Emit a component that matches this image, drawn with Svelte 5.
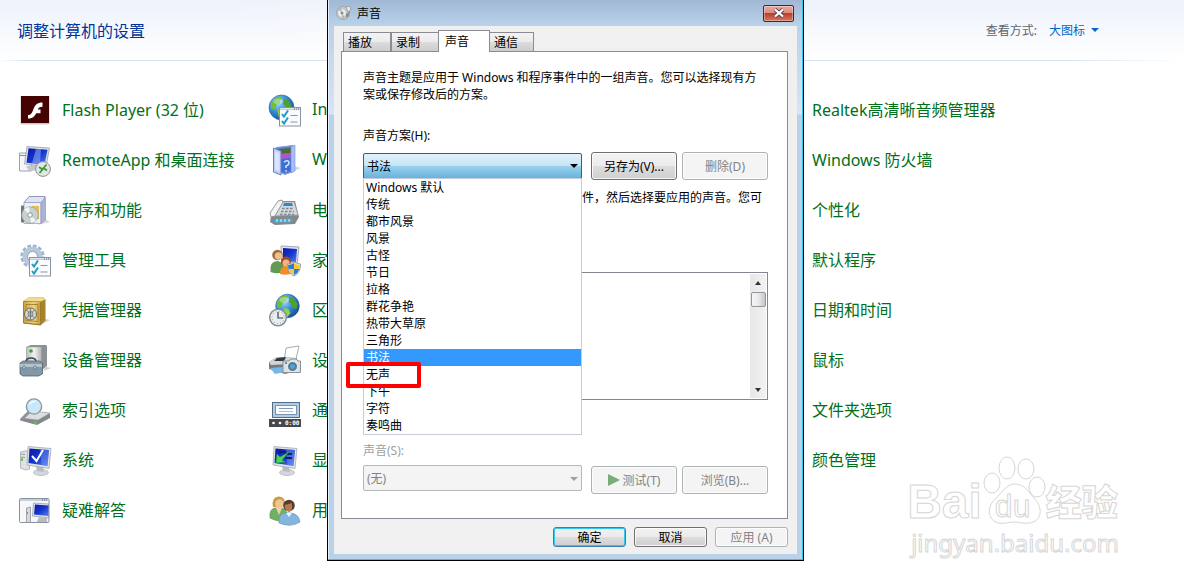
<script>
    const columns = [
        {
            place: "first",
            items: [
                { icon: "flash", label: "Flash Player (32 位)" },
                { icon: "remote", label: "RemoteApp 和桌面连接" },
                { icon: "programs", label: "程序和功能" },
                { icon: "tools", label: "管理工具" },
                { icon: "safe", label: "凭据管理器" },
                { icon: "device", label: "设备管理器" },
                { icon: "index", label: "索引选项" },
                { icon: "system", label: "系统" },
                { icon: "trouble", label: "疑难解答" },
            ],
        },
        {
            place: "second",
            items: [
                { icon: "internet", label: "In" },
                { icon: "cards", label: "W" },
                { icon: "phone", label: "电" },
                { icon: "family", label: "家" },
                { icon: "region", label: "区" },
                { icon: "printer", label: "设" },
                { icon: "taskbar", label: "通" },
                { icon: "display", label: "显" },
                { icon: "users", label: "用" },
            ],
        },
        {
            place: "fourth",
            items: [
                { label: "Realtek高清晰音频管理器" },
                { label: "Windows 防火墙" },
                { label: "个性化" },
                { label: "默认程序" },
                { label: "日期和时间" },
                { label: "鼠标" },
                { label: "文件夹选项" },
                { label: "颜色管理" },
            ],
        },
    ];

    const tabs = ["播放", "录制", "声音", "通信"];
    let activeTab = $state("声音");

    const schemes = [
        "Windows 默认",
        "传统",
        "都市风景",
        "风景",
        "古怪",
        "节日",
        "拉格",
        "群花争艳",
        "热带大草原",
        "三角形",
        "书法",
        "无声",
        "下午",
        "字符",
        "奏鸣曲",
    ];
    let scheme = $state("书法");
</script>

{#snippet checklist()}
    <rect x="10.5" y="13.5" width="21" height="18.5" fill="#fafbfd" stroke="#8a93a3" />
    <path d="M11 14.5h20v1.5H11z" fill="#c5ccd8" />
    <path d="M25 15h1m1 0h1m1 0h1" stroke="#55607a" />
    <path d="M13 20l2 2.5 4-6M13 27l2 2.5 4-6" fill="none" stroke="#1f9bc4" stroke-width="2" />
    <path d="M21.5 21.5h7M21.5 28h7" stroke="#8d93a8" stroke-width="1.2" />
{/snippet}

{#snippet globe(cx, cy, r)}
    <circle {cx} {cy} {r} fill="url(#sea)" stroke="#2a5d9e" stroke-width=".6" />
    <g transform="translate({cx} {cy})">
        <path d="M-9-6q3-5 8-5l2 2-3 2 1 3-4 1-1 4-4 1-1-3z" fill="#6cbf3c" />
        <path d="M2-9l5 2 3 5-1 5-4-1-1-4-3-2z" fill="#4f9f2e" />
        <path d="M-4 2l5 1 2 4-3 4-3-2z" fill="#8fd04d" />
        <ellipse cx="-3" cy="-6" rx="5" ry="3" fill="#fff" opacity=".35" />
    </g>
{/snippet}

{#snippet screen()}
    <ellipse cx="22" cy="28.5" rx="7.5" ry="3" fill="#d3d6da" stroke="#a4a8ad" stroke-width=".6" />
    <path d="M17 22l7 1 1 5-7-1z" fill="#b9bdc3" />
    <path d="M9 2.5l23 2-2 20-22-3.500z" fill="#dfe3e6" stroke="#9ba0a6" stroke-width=".7" />
    <path d="M10.5 4.500l19.500 1.600-1.500 16-19-3z" fill="url(#blue)" />
    <path d="M21 5.300l9 .8-1.500 16-6-1z" fill="#7fa4f5" opacity=".4" />
{/snippet}

{#snippet icon(name)}
    <svg class="icon" viewBox="0 0 32 32" aria-hidden="true">
        {#if name === "flash"}
            <rect x="1.5" y="2" width="29" height="28.5" rx="1" fill="#c9c9c9" />
            <rect x="2" y="2" width="28" height="27" fill="#440203" />
            <path d="M23.5 8.500v4.300c-3 0-4 .8-4.700 2.700H21.500v3.700h-4.300c-1.800 3.500-3.800 5.300-8.200 5.300v-3.500c3 0 4-2 5.300-5.500 1.600-4.500 4-7 9.200-7z" fill="#fff" />
        {:else if name === "remote"}
            <path d="M.5 9h12v18H.5z" fill="#f4f6f9" stroke="#9aa3b0" />
            <path d="M1 11.500h8" stroke="#7b8ca8" />
            <path d="M7 22l13-1 3 5-13 1z" fill="#c3c7cd" />
            <path d="M8 2.500l22.500 1.500-3.500 18.500-21.500-2.500z" fill="#dde1e5" stroke="#8e949c" stroke-width=".7" />
            <path d="M9.500 4.300l19 1.400-3 15-18-2z" fill="url(#blue)" />
            <path d="M17 5l5 .3-1 15-8-1z" fill="#8fb0fa" opacity=".55" />
            <circle cx="24" cy="25" r="7.4" fill="#e3e5e7" stroke="#8d9196" />
            <path d="M20 23l3.500 2.500-3 3.500M27.500 20.500l-3 3.500 3.500 2.500" fill="none" stroke="#3b9b32" stroke-width="1.8" />
        {:else if name === "programs"}
            <path d="M25 24l6 4-12 3z" fill="#c7c9cc" opacity=".7" />
            <path d="M10 2.500h16l-2 6H5z" fill="#dfe4f5" stroke="#7780a8" stroke-width=".8" />
            <path d="M5 8.500h17v21H5z" fill="#edf0f9" stroke="#9aa2c0" stroke-width=".8" />
            <path d="M22 8.500l4.500-5V26L22 29.500z" fill="#a9b4d8" stroke="#8890b5" stroke-width=".6" />
            <path d="M13 12h7v13h-7z" fill="#e9b85d" />
            <path d="M2 11.500h3v17H2z" fill="#727b82" />
            <circle cx="11" cy="21" r="8.3" fill="#c9d0d0" stroke="#949d9b" stroke-width=".7" />
            <path d="M11 21L5 15.500a8 8 0 0 1 5-2.500zM11 21l6 5.500a8 8 0 0 1-5 2.300z" fill="#f2f8f2" />
            <circle cx="11" cy="21" r="2.3" fill="#fff" stroke="#899" />
        {:else if name === "tools"}
            <circle cx="13.5" cy="12.5" r="10.6" fill="none" stroke="#a0b4cb" stroke-width="3" stroke-dasharray="3.7 1.85" />
            <circle cx="13.5" cy="12.5" r="7.5" fill="none" stroke="#b6c8dc" stroke-width="5" />
            <circle cx="13.5" cy="12.5" r="5" fill="#fff" stroke="#879cb5" />
            {@render checklist()}
        {:else if name === "safe"}
            <path d="M23 24l8 2-8 4z" fill="#d5d5d5" />
            <path d="M4.500 7l5-3.500h15l2 2v21l-5 5-17-2z" fill="#a9812b" />
            <path d="M4.500 7.500h17v23l-17-1.500z" fill="url(#gold)" stroke="#98762a" stroke-width=".8" />
            <path d="M4.500 7l5-3.500h15l2 2-5 2z" fill="#f0db8d" />
            <path d="M7 10.500h12v17l-12-1z" fill="none" stroke="#ad852e" />
            <circle cx="11.5" cy="20" r="6" fill="#d4d7d2" stroke="#6b6c66" />
            <circle cx="11.5" cy="20" r="2.5" fill="#f3f3f3" stroke="#777" />
            <path d="M7.500 16l8 8m0-8l-8 8M11.500 14.500v11" stroke="#777b78" />
        {:else if name === "device"}
            <path d="M27 23l5 1-8 3z" fill="#ccc" />
            <path d="M7.500 3l4-2h15.500l1 1v20l-5 4H7.500z" fill="#8e9194" />
            <path d="M7.500 3h15v23h-15z" fill="url(#metal)" stroke="#999" stroke-width=".5" />
            <circle cx="12" cy="7" r="1.8" fill="#35a532" />
            <path d="M7 18q0-4 5-4t5 4" fill="none" stroke="#3c454d" stroke-width="1.7" />
            <path d="M1 19l3-2h17l2.500 2v11l-4 2H4l-3-2z" fill="#8297a8" stroke="#526572" stroke-width=".8" />
            <path d="M1 20h22v3H1z" fill="#b4c4cf" />
            <path d="M4 22h2v3H4zM15 22h2v3h-2z" fill="#e8edf1" stroke="#536470" stroke-width=".7" />
        {:else if name === "index"}
            <path d="M3 24l11-7 17 2v5l-13 7-15-4z" fill="#85888b" />
            <path d="M3 24l11-7 17 2-12 7z" fill="#dcdee0" stroke="#a1a4a7" stroke-width=".6" />
            <path d="M15 27l2.500 .5v2.500l-2.500-.5z" fill="#4cd53f" />
            <path d="M10 18l-7.500 7.500" stroke="#8c9297" stroke-width="3" stroke-linecap="round" />
            <circle cx="15" cy="12.5" r="7.6" fill="#cbe8fa" stroke="#8e999f" stroke-width="1.4" />
            <path d="M10 11q2-5 8-4-5 1-8 4z" fill="#fff" />
        {:else if name === "system"}
            <path d="M1.500 8l4-1h5v18l-4 1-5-2z" fill="#dfe1e4" stroke="#9a9da3" stroke-width=".7" />
            <path d="M2 10l4 .5M2 13l4 .5" stroke="#989ba3" />
            <path d="M3 14v3" stroke="#45c52e" stroke-width="1.5" />
            {@render screen()}
            <path d="M13 12l4.500 5 6.500-11" fill="none" stroke="#fff" stroke-width="2" />
        {:else if name === "trouble"}
            <rect x=".5" y="4.5" width="29.5" height="24" rx="1" fill="#f5f7fa" stroke="#8792a0" />
            <path d="M1 5h28.500v2H1z" fill="#c7d1dd" />
            <path d="M23 6h1m1 0h1m1 0h1" stroke="#4b5870" />
            <path d="M7.500 14l4-1v15.500h-4z" fill="#d5d8db" stroke="#85898e" stroke-width=".7" />
            <path d="M8.500 18v2" stroke="#42b936" />
            <path d="M14.500 9l15 1v14l-16-2z" fill="#dde2e8" stroke="#8b929d" stroke-width=".7" />
            <path d="M16 10.500l13.500 1V22l-14.500-1.500z" fill="url(#blue)" />
            <path d="M20 23l8 1v4h-10z" fill="#b8bbc0" />
        {:else if name === "internet"}
            {@render globe(12.5, 13.5, 12.5)}
            {@render checklist()}
        {:else if name === "cards"}
            <path d="M25 22l7 2-9 4z" fill="#d6d8dc" />
            <path d="M7 3.500l17-2v26l-8 3-9-4z" fill="#5f7cd5" stroke="#889ee2" />
            <path d="M10 5l12-1v5l-11 1z" fill="#486f32" />
            <path d="M11 10l11-1v5l-11 1z" fill="#b653c5" />
            <path d="M12 15l10-1v13l-10 1z" fill="#3a6fd6" />
            <path d="M15 18q5-3 5 1 0 2-3 3v2m0 2v1.500" fill="none" stroke="#cfe0ff" stroke-width="1.6" />
            <path d="M4.500 4l7.500 3v24l-7.500-3z" fill="#bdcdf6" stroke="#657fcb" />
            <path d="M6 7l4.500 2v18.500l-4.500-2z" fill="#dbe6fe" />
            <path d="M22 3l4-2v26l-4 2z" fill="#a9bef5" stroke="#7590de" stroke-width=".6" />
        {:else if name === "phone"}
            <path d="M2 22l8-15 16 0 4 16-4 7-20 1-5-3z" fill="#85898d" />
            <path d="M3 22l8-14 14 0 4 13z" fill="#d6d9db" stroke="#9ba0a5" stroke-width=".6" />
            <path d="M1 19l8-12 4-1 1 2-8 14-4 1z" fill="#f3f4f5" stroke="#7d8286" stroke-width=".8" />
            <path d="M15 9h8l1 3H14z" fill="#258dcb" />
            <path d="M13 14.500h12M12 17.500h13M11 20.500h14" stroke="#7f8589" stroke-width="1.5" stroke-dasharray="2.5 1.5" />
            <path d="M5 25.500l18-1v3l-18 1z" fill="#35b5e4" />
            <path d="M8 25v3m4-3v3m4-3v3m4-3v3" stroke="#d8f6ff" />
        {:else if name === "family"}
            <path d="M12 2l18 1-2 18-15-2z" fill="#e0e4ed" stroke="#a2a9b8" />
            <path d="M14 4l14 1-1 13-13-1z" fill="url(#blue)" />
            <circle cx="8.500" cy="11" r="5.3" fill="#a26c32" />
            <circle cx="9.500" cy="12" r="3.7" fill="#efbf94" />
            <path d="M1.500 28q-1-11 7-11 7 1 8 10-6 4-15 1z" fill="#619a54" />
            <circle cx="17" cy="17.5" r="5" fill="#99501f" />
            <circle cx="17" cy="19" r="3.5" fill="#efb485" />
            <path d="M11 30q0-8 6-8 6 1 7 7-6 3-13 1z" fill="#f18c26" />
            <path d="M25 18q4 2 6.500 2 0 9-6.500 12-6.500-3-6.500-12 3 0 6.500-2z" fill="#eee" stroke="#929ba6" />
            <path d="M25 19v6h-5.500l-.5-4q3 0 6-2zM25 25h5.500q-1.500 4-5.500 6z" fill="#3279cf" />
            <path d="M25 19v6h5.500l.5-4q-3 0-6-2zM25 25h-5.500q1.500 4 5.500 6z" fill="#fac838" />
        {:else if name === "region"}
            {@render globe(18.5, 12, 11.8)}
            <circle cx="9" cy="23.5" r="8.3" fill="#e9edf0" stroke="#87919a" stroke-width="1.5" />
            <circle cx="9" cy="23.5" r="6" fill="none" stroke="#7d858d" stroke-dasharray=".8 2.34" />
            <path d="M9 18v6h5" fill="none" stroke="#38434e" stroke-width="1.2" />
        {:else if name === "printer"}
            <path d="M17 4l13-2-3 13-12 2z" fill="#fff" stroke="#a6acb0" />
            <path d="M0 18l8-5 19 1 4 5v7l-15 4-16-5z" fill="#747a7f" />
            <path d="M0 18l8-5 19 1-5 6-20 1z" fill="#cfd4d7" />
            <path d="M8 14l9-1-2 4H5z" fill="#33393e" />
            <path d="M1 24l13-1 2 5-10 2z" fill="#7ab6e3" />
            <path d="M14 17h6l2-2h5l2 2h2.500v11.500H14z" fill="#dce1e4" stroke="#889198" />
            <circle cx="23.5" cy="22.5" r="5" fill="#617789" stroke="#f4f6f7" />
            <circle cx="23.5" cy="22.5" r="2.5" fill="#47a6df" />
            <path d="M16 19h2" stroke="#2f79bb" stroke-width="1.5" />
        {:else if name === "taskbar"}
            <rect x="3.5" y="8.5" width="27" height="15" fill="#b1cce5" stroke="#546d87" />
            <rect x="6.5" y="11.5" width="21" height="9" fill="#fbfcfd" stroke="#7893ad" />
            <path d="M10 14.500h14" stroke="#7c9aba" />
            <path d="M10 17.500h14" stroke="#aebfd0" />
            <path d="M0 25h32v8H0z" fill="#45494d" />
            <circle cx="4.5" cy="29" r="1.3" fill="#fff" />
            <circle cx="11" cy="29" r="1.3" fill="#fff" />
            <text x="16" y="31" class="clock">0:00</text>
        {:else if name === "display"}
            <g transform="translate(-4)">
                {@render screen()}
                <path d="M20 10h7M20 14h7M14 8h7" stroke="#10206f" stroke-width="2" />
                <path d="M11 19l1-9 3 3 9-5-7 8 3 2z" fill="#4bd656" stroke="#249f40" stroke-width=".6" />
            </g>
        {:else if name === "users"}
            <path d="M1 24q-1-9 5-10h7q6 2 6 12-9 3-18-2z" fill="#71b163" stroke="#4e8b45" stroke-width=".6" />
            <path d="M7 14l3 7 3-7z" fill="#f1cfa7" />
            <path d="M4 13Q2 3 10 2.500q7 0 6 10z" fill="#c99c42" />
            <circle cx="10.5" cy="9.500" r="4.3" fill="#efc596" />
            <path d="M10 29q-1-9 6-10h6q8 1 9 9-9 6-21 1z" fill="#83b5de" stroke="#5b8dba" stroke-width=".6" />
            <circle cx="20" cy="11.5" r="5.8" fill="#503e33" />
            <path d="M15.500 11q5-1 7-2 2 8-2.500 9-4-1-4.500-7z" fill="#b9774a" />
            <path d="M17 19l3 4 3-4z" fill="#eef5fb" />
        {/if}
    </svg>
{/snippet}

<svg class="defs" aria-hidden="true">
    <defs>
        <radialGradient id="sea" cx=".35" cy=".3" r=".8">
            <stop offset="0" stop-color="#a5dcff" />
            <stop offset=".5" stop-color="#338ad4" />
            <stop offset="1" stop-color="#123f92" />
        </radialGradient>
        <linearGradient id="blue" x1="0" y1="0" x2="1" y2="1">
            <stop offset="0" stop-color="#0c18a0" />
            <stop offset=".5" stop-color="#1535cf" />
            <stop offset="1" stop-color="#577fe8" />
        </linearGradient>
        <linearGradient id="gold">
            <stop offset="0" stop-color="#c8a147" />
            <stop offset=".6" stop-color="#ecd587" />
            <stop offset="1" stop-color="#c39b3c" />
        </linearGradient>
        <linearGradient id="metal">
            <stop offset="0" stop-color="#bbbdbf" />
            <stop offset=".5" stop-color="#f2f2f2" />
            <stop offset="1" stop-color="#b3b5b7" />
        </linearGradient>
    </defs>
</svg>

<main class="control-panel">
    <header class="panel-header">
        <h1>调整计算机的设置</h1>
        <div class="view-by">
            <span>查看方式:</span>
            <button class="view-button">大图标 <i class="caret"></i></button>
        </div>
    </header>

    <div class="columns">
        {#each columns as column}
            <nav class="column {column.place}">
                {#each column.items as item}
                    <a class="item" href="#top">
                        {@render icon(item.icon)}
                        <span>{item.label}</span>
                    </a>
                {/each}
            </nav>
        {/each}
    </div>

    <div class="watermark" aria-hidden="true">
        <div class="brand">
            <span class="bai">Bai</span>
            <span class="paw">
                <svg viewBox="0 0 64 72">
                    <ellipse cx="10" cy="28" rx="8" ry="10" />
                    <ellipse cx="25" cy="13" rx="8" ry="11" />
                    <ellipse cx="44" cy="14" rx="8" ry="10" />
                    <ellipse cx="55" cy="32" rx="8" ry="10" />
                    <path d="M33 29c-9 0-13 9-20 15-8 7-8 22 4 24 6 1 10-1 15-1s10 2 16 1c12-2 13-15 5-24-6-6-10-15-20-15z" />
                </svg>
                <span class="du">du</span>
            </span>
            <span class="exp">经验</span>
        </div>
        <div class="site">jingyan.baidu.com</div>
    </div>

    <section class="dialog" role="dialog" aria-label="声音">
        <div class="title-bar">
            <svg class="speaker" viewBox="0 0 16 16" aria-hidden="true">
                <circle cx="7" cy="8" r="6.5" fill="#c9ccce" stroke="#a2a7aa" />
                <circle cx="6" cy="8" r="4.3" fill="#eceeef" stroke="#b4b9bc" stroke-width=".7" />
                <path d="M6 8L2 4l3-2zM6 8l3 5-3 1z" fill="#b3b7ba" />
                <circle cx="6" cy="8" r="1.5" fill="#8b9196" />
                <path d="M10 2l4-1 1 4-3 2z" fill="#e5e6e7" stroke="#8b9196" stroke-width=".7" />
                <path d="M10 9l4-3-1 5-3 2z" fill="#8b9194" />
            </svg>
            <span class="title">声音</span>
            <button class="close" aria-label="关闭">
                <svg viewBox="0 0 12 10" aria-hidden="true">
                    <path d="M2 1.500l8 7m0-7l-8 7" stroke="#5c4246" stroke-width="4" />
                    <path d="M2 1.500l8 7m0-7l-8 7" stroke="#fff" stroke-width="2.3" />
                </svg>
            </button>
        </div>

        <div class="dialog-body">
            <div class="tabs" role="tablist">
                {#each tabs as tab}
                    <button
                        class="tab"
                        class:active={tab === activeTab}
                        role="tab"
                        aria-selected={tab === activeTab}
                        onclick={() => (activeTab = tab)}>{tab}</button
                    >
                {/each}
            </div>

            <div class="sheet">
                <p class="intro">
                    声音主题是应用于 Windows 和程序事件中的一组声音。您可以选择现有方案或保存修改后的方案。
                </p>
                <label class="scheme-label" for="scheme">声音方案(H):</label>
                <div class="row">
                    <div class="combo open">
                        <select id="scheme" class="select hot">
                            <option>{scheme}</option>
                        </select>
                        <i class="caret dark"></i>
                        <ul class="dropdown" role="listbox" aria-label="声音方案">
                            {#each schemes as name}
                                <li
                                    role="option"
                                    aria-selected={name === scheme}
                                    class:selected={name === scheme}
                                >
                                    {name}
                                    {#if name === "无声"}<i class="marker"></i>{/if}
                                </li>
                            {/each}
                        </ul>
                    </div>
                    <button class="btn">另存为(V)...</button>
                    <button class="btn" disabled>删除(D)</button>
                </div>
                <p class="hint">件，然后选择要应用的声音。您可</p>
                <div class="events">
                    <div class="scrollbar">
                        <i class="arrow up"></i>
                        <i class="thumb"></i>
                        <i class="arrow down"></i>
                    </div>
                </div>
                <label class="sound-label" for="sound">声音(S):</label>
                <div class="row preview">
                    <div class="combo">
                        <select id="sound" class="select" disabled>
                            <option>(无)</option>
                        </select>
                        <i class="caret muted"></i>
                    </div>
                    <button class="btn" disabled><i class="play"></i>测试(T)</button>
                    <button class="btn" disabled>浏览(B)...</button>
                </div>
            </div>

            <footer class="actions">
                <button class="btn small default">确定</button>
                <button class="btn small">取消</button>
                <button class="btn small" disabled>应用 (A)</button>
            </footer>
        </div>
    </section>
</main>

<style>
    :global(body) {
        background: #fff;
        overflow: hidden;
    }

    .control-panel {
        position: relative;
        min-height: 100vh;
        overflow: hidden;
        font-family: "Noto Sans", "Noto Sans CJK SC", sans-serif;
        font-size: 12px;
    }

    .control-panel * {
        box-sizing: border-box;
    }

    button,
    select {
        font: inherit;
        margin: 0;
    }

    .defs {
        position: absolute;
        width: 0;
        height: 0;
    }

    .panel-header {
        display: flex;
        align-items: center;
        justify-content: space-between;
        height: 61px;
        padding: 0 85px 2px 17px;
        background:
            linear-gradient(90deg, #fff, #d5e3f2 24px, #d5e3f2 90%, #fff) bottom / 100% 1px no-repeat,
            linear-gradient(60deg, transparent 20%, rgba(255, 255, 255, 0.4) 45%, transparent 55%),
            linear-gradient(#edf2fb, #fff);
    }

    h1 {
        margin: 0;
        font-size: 16px;
        font-weight: 400;
        color: #003399;
    }

    .view-by {
        display: flex;
        gap: 12px;
        color: #5a6673;
    }

    .view-button {
        display: flex;
        align-items: center;
        gap: 6px;
        padding: 0;
        border: 0;
        background: none;
        color: #0066cc;
    }

    .caret {
        width: 0;
        height: 0;
        border: 4px solid transparent;
        border-top-color: #0066cc;
        border-bottom: 0;
    }

    .columns {
        display: grid;
        grid-template-columns: repeat(4, 250px);
        padding: 24px 0 0 19px;
    }

    .first {
        grid-column: 1;
    }

    .second {
        grid-column: 2;
    }

    .fourth {
        grid-column: 4;
    }

    .item {
        display: flex;
        align-items: center;
        gap: 11px;
        height: 50px;
        font-size: 16px;
        color: #00701c;
        text-decoration: none;
        white-space: nowrap;
    }

    .item span {
        padding-bottom: 2px;
    }

    .icon {
        flex: none;
        width: 32px;
        height: 32px;
        overflow: visible;
    }

    .clock {
        font: bold 6px "DejaVu Sans Mono", monospace;
        fill: #fff;
    }

    /* Dialog window */
    .dialog {
        position: absolute;
        top: 0;
        left: 327px;
        width: 477px;
        padding: 0 6px 6px;
        border: 1px solid #000;
        border-top: 0;
        background: linear-gradient(#a0b8d4, #bad1ea 25px, #d7e5f5 114px, #bad1ea 115px);
        box-shadow: inset -1px -1px #30c8e8, inset 1px 0 #e8f1fa;
    }

    .title-bar {
        display: flex;
        align-items: center;
        height: 26px;
        padding: 0 3px 0 2px;
    }

    .speaker {
        width: 16px;
        height: 16px;
    }

    .title {
        flex: 1;
        padding-left: 5px;
    }

    .close {
        display: flex;
        align-items: center;
        justify-content: center;
        width: 31px;
        height: 17px;
        padding: 0;
        border: 1px solid #52202a;
        border-radius: 2px;
        background: linear-gradient(#e8aaa0, #dc8b7c 48%, #b9402c 50%, #d4785e);
        box-shadow: inset 0 0 0 1px rgba(255, 255, 255, 0.35);
    }

    .close svg {
        width: 12px;
        height: 10px;
    }

    .dialog-body {
        padding: 5px 9px 7px 7px;
        background: #f0f0f0;
    }

    .tabs {
        display: flex;
        align-items: flex-end;
        height: 20px;
        padding-left: 2px;
    }

    .tab {
        width: 48px;
        height: 19px;
        padding: 1px 12px 0 4px;
        border: 1px solid #898c95;
        border-bottom: 0;
        background: linear-gradient(#f3f3f3, #ebebeb 50%, #dcdcdc 51%, #cdcdcd);
        line-height: 18px;
        text-align: left;
    }

    .tab.active {
        position: relative;
        width: 52px;
        height: 22px;
        margin: 0 -1px -1px;
        padding-top: 0;
        padding-left: 6px;
        background: #fff;
    }

    .tab:last-child {
        width: 45px;
    }

    .sheet {
        padding: 17px 19px 24px 21px;
        border: 1px solid #898c95;
        background: #fff;
    }

    .intro {
        margin: 0;
        padding-right: 5px;
        line-height: 17px;
    }

    .scheme-label,
    .sound-label {
        display: block;
        line-height: 17px;
    }

    .scheme-label {
        margin: 24px 0 8px;
    }

    .sound-label {
        margin: 42px 0 6px;
        color: #a0a0a0;
    }

    .row {
        display: flex;
        gap: 5px;
    }

    .combo {
        position: relative;
        flex: 1;
        margin-right: 4px;
    }

    .combo.open {
        padding-top: 1px;
    }

    .preview .btn {
        margin-top: 1px;
    }

    .select {
        appearance: none;
        display: block;
        width: 100%;
        height: 26px;
        padding: 0 3px;
        border: 1px solid #b5b8bb;
        border-radius: 2px;
        background: #f4f4f4;
        color: #838383;
        opacity: 1;
    }

    .select.hot {
        border-color: #2c628b;
        background: linear-gradient(#e3f2fb, #c6e5f6 48%, #9bd2ee 50%, #68b3db);
        color: #000;
    }

    .combo .caret {
        position: absolute;
        top: 12px;
        right: 4px;
    }

    .caret.dark {
        border-top-color: #000;
    }

    .caret.muted {
        border-top-color: #a0a0a0;
    }

    .dropdown {
        position: absolute;
        z-index: 1;
        top: 26px;
        left: 0;
        right: 0;
        margin: 0;
        padding: 0;
        border: 1px solid #c8cbdc;
        background: #fff;
        list-style: none;
    }

    .dropdown li {
        position: relative;
        height: 17px;
        padding-left: 2px;
        line-height: 17px;
    }

    .dropdown .selected {
        background: #3399ff;
        color: #fff;
    }

    /* Red frame round the scheme to pick */
    .marker {
        position: absolute;
        z-index: 1;
        top: -4px;
        left: -18px;
        width: 75px;
        height: 26px;
        border: 4px solid #ff0000;
        border-radius: 2px;
    }

    .btn {
        display: flex;
        align-items: center;
        justify-content: center;
        gap: 3px;
        width: 86px;
        height: 28px;
        padding: 0;
        border: 1px solid #707070;
        border-radius: 3px;
        background: linear-gradient(#f2f2f2, #ebebeb 49%, #dddddd 50%, #cfcfcf);
        box-shadow: inset 0 0 0 1px rgba(255, 255, 255, 0.8);
        color: #000;
    }

    .btn:disabled {
        border-color: #adb2b5;
        background: #f4f4f4;
        color: #838383;
    }

    .btn.small {
        width: 73px;
        height: 20px;
    }

    .btn.default {
        border-color: #3c7fb1;
        box-shadow: inset 0 0 0 1px #30c8ee;
    }

    .play {
        border: 6px solid transparent;
        border-left: 12px solid #78ad79;
        border-right: 0;
    }

    .hint {
        margin: 9px 0 66px 219px;
        line-height: 17px;
        white-space: nowrap;
    }

    .events {
        display: flex;
        justify-content: flex-end;
        height: 128px;
        padding: 1px;
        border: 1px solid #828790;
    }

    .scrollbar {
        display: flex;
        flex-direction: column;
        align-items: center;
        width: 16px;
        padding: 7px 0 6px;
        background: linear-gradient(90deg, #e7e7e7, #f2f2f2);
    }

    .arrow {
        border: 3px solid transparent;
    }

    .arrow.up {
        border-top: 0;
        border-bottom: 4px solid #333;
    }

    .arrow.down {
        margin-top: auto;
        border-top: 4px solid #333;
        border-bottom: 0;
    }

    .thumb {
        width: 15px;
        height: 15px;
        margin-top: 7px;
        border: 1px solid #979797;
        border-radius: 2px;
        background: linear-gradient(90deg, #f5f5f5, #e8e8eb 50%, #c6c7cc);
    }

    .actions {
        display: flex;
        justify-content: flex-end;
        gap: 8px;
        padding-top: 8px;
    }

    /* Watermark in the corner */
    .watermark {
        position: absolute;
        right: 65px;
        bottom: 20px;
        color: #fff;
        -webkit-text-stroke: 1px #d6d6d6;
    }

    .brand {
        display: flex;
        align-items: flex-end;
        height: 72px;
    }

    .bai {
        font: bold 48px/50px "Liberation Sans", sans-serif;
    }

    .paw {
        position: relative;
        width: 64px;
        height: 72px;
    }

    .paw svg {
        display: block;
        fill: #fff;
        stroke: #d6d6d6;
    }

    .du {
        position: absolute;
        left: 13px;
        bottom: 4px;
        font: 32px/34px "Liberation Sans", sans-serif;
    }

    .exp {
        font: 900 36px/54px "Noto Sans CJK SC", sans-serif;
    }

    .brand {
        margin-left: -4px;
    }

    .site {
        font: 24px/32px "Noto Sans", sans-serif;
    }
</style>
